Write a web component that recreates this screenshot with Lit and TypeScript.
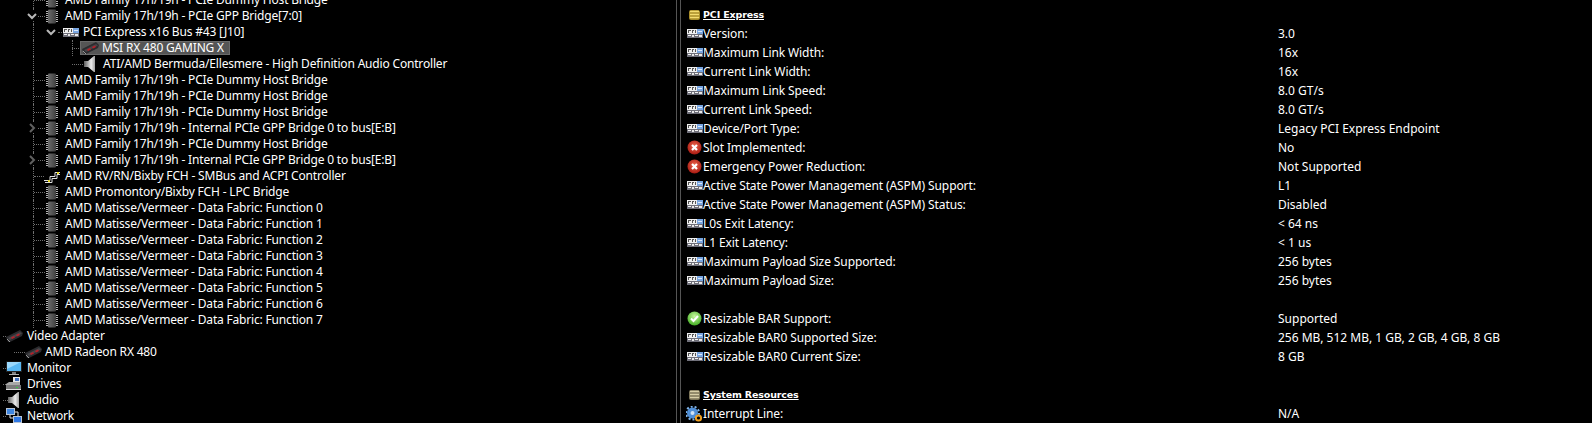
import { LitElement, html, css, svg, nothing } from 'lit';
import { customElement } from 'lit/decorators.js';

type IconName = 'chip' | 'pci' | 'gpu' | 'audio' | 'smbus' | 'monitor' | 'drive' | 'net';

interface TreeRow {
  text: string;
  icon: IconName;
  indent: number;       // icon left edge
  textX: number;        // text left edge
  guides?: number[];    // vertical dotted lines running through the row
  stub?: [number, number];
  chevron?: { x: number; open: boolean };
  selected?: boolean;
}

const chipRow = (text: string, chevron?: boolean, open = false): TreeRow => ({
  text, icon: 'chip', indent: 46, textX: 65, guides: [33], stub: [34, 45],
  chevron: chevron ? { x: 32, open } : undefined,
});

const TREE: TreeRow[] = [
  chipRow('AMD Family 17h/19h - PCIe Dummy Host Bridge'),
  chipRow('AMD Family 17h/19h - PCIe GPP Bridge[7:0]', true, true),
  { text: 'PCI Express x16 Bus #43 [J10]', icon: 'pci', indent: 63, textX: 83, guides: [33], stub: [58, 62], chevron: { x: 51, open: true } },
  { text: 'MSI RX 480 GAMING X', icon: 'gpu', indent: 82, textX: 102, guides: [33, 72], stub: [72, 81], selected: true },
  { text: 'ATI/AMD Bermuda/Ellesmere - High Definition Audio Controller', icon: 'audio', indent: 84, textX: 103, guides: [33], stub: [72, 83] },
  chipRow('AMD Family 17h/19h - PCIe Dummy Host Bridge'),
  chipRow('AMD Family 17h/19h - PCIe Dummy Host Bridge'),
  chipRow('AMD Family 17h/19h - PCIe Dummy Host Bridge'),
  chipRow('AMD Family 17h/19h - Internal PCIe GPP Bridge 0 to bus[E:B]', true),
  chipRow('AMD Family 17h/19h - PCIe Dummy Host Bridge'),
  chipRow('AMD Family 17h/19h - Internal PCIe GPP Bridge 0 to bus[E:B]', true),
  { text: 'AMD RV/RN/Bixby FCH - SMBus and ACPI Controller', icon: 'smbus', indent: 44, textX: 65, guides: [33], stub: [34, 44] },
  chipRow('AMD Promontory/Bixby FCH - LPC Bridge'),
  ...[0, 1, 2, 3, 4, 5, 6, 7].map((n) => chipRow(`AMD Matisse/Vermeer - Data Fabric: Function ${n}`)),
  { text: 'Video Adapter', icon: 'gpu', indent: 6, textX: 27, stub: [3, 6] },
  { text: 'AMD Radeon RX 480', icon: 'gpu', indent: 25, textX: 45, stub: [14, 25] },
  { text: 'Monitor', icon: 'monitor', indent: 6, textX: 27, stub: [3, 6] },
  { text: 'Drives', icon: 'drive', indent: 6, textX: 27, stub: [3, 6] },
  { text: 'Audio', icon: 'audio', indent: 8, textX: 27, stub: [3, 8] },
  { text: 'Network', icon: 'net', indent: 6, textX: 27, stub: [3, 6] },
];

type DetailIcon = 'pci' | 'err' | 'ok' | 'gear';

interface DetailRow {
  label?: string;
  value?: string;
  icon?: DetailIcon;
  header?: 'gold' | 'grey';
}

const DETAILS: DetailRow[] = [
  { label: 'PCI Express', header: 'gold' },
  { label: 'Version:', value: '3.0', icon: 'pci' },
  { label: 'Maximum Link Width:', value: '16x', icon: 'pci' },
  { label: 'Current Link Width:', value: '16x', icon: 'pci' },
  { label: 'Maximum Link Speed:', value: '8.0 GT/s', icon: 'pci' },
  { label: 'Current Link Speed:', value: '8.0 GT/s', icon: 'pci' },
  { label: 'Device/Port Type:', value: 'Legacy PCI Express Endpoint', icon: 'pci' },
  { label: 'Slot Implemented:', value: 'No', icon: 'err' },
  { label: 'Emergency Power Reduction:', value: 'Not Supported', icon: 'err' },
  { label: 'Active State Power Management (ASPM) Support:', value: 'L1', icon: 'pci' },
  { label: 'Active State Power Management (ASPM) Status:', value: 'Disabled', icon: 'pci' },
  { label: 'L0s Exit Latency:', value: '< 64 ns', icon: 'pci' },
  { label: 'L1 Exit Latency:', value: '< 1 us', icon: 'pci' },
  { label: 'Maximum Payload Size Supported:', value: '256 bytes', icon: 'pci' },
  { label: 'Maximum Payload Size:', value: '256 bytes', icon: 'pci' },
  {},
  { label: 'Resizable BAR Support:', value: 'Supported', icon: 'ok' },
  { label: 'Resizable BAR0 Supported Size:', value: '256 MB, 512 MB, 1 GB, 2 GB, 4 GB, 8 GB', icon: 'pci' },
  { label: 'Resizable BAR0 Current Size:', value: '8 GB', icon: 'pci' },
  {},
  { label: 'System Resources', header: 'grey' },
  { label: 'Interrupt Line:', value: 'N/A', icon: 'gear' },
];

const pciIcon = svg`<svg width="16" height="9" viewBox="0 0 16 9">
  <rect width="16" height="9" fill="#f0f0f0"/>
  <rect x="1" y="1" width="1" height="3" fill="#555"/><rect x="2" y="1" width="2" height="1" fill="#555"/>
  <rect x="5" y="1" width="2" height="1" fill="#555"/><rect x="5" y="1" width="1" height="3" fill="#555"/>
  <rect x="8" y="1" width="1" height="3" fill="#555"/>
  <rect x="10" y="0" width="6" height="5" fill="#7aa6e0"/>
  <rect x="11" y="2" width="4" height="1" fill="#dbe8fa"/>
  <rect x="0" y="5" width="16" height="4" fill="#70707a"/>
  <rect x="1" y="6" width="3" height="1" fill="#f4f4f4"/><rect x="5" y="6" width="2" height="2" fill="#e8e8e8"/>
  <rect x="8" y="6" width="3" height="1" fill="#f4f4f4"/><rect x="12" y="6" width="3" height="2" fill="#e8e8e8"/>
</svg>`;

const chipIcon = svg`<svg width="12" height="15" viewBox="0 0 12 15">
  <defs><linearGradient id="c" x1="0" x2="1"><stop offset="0" stop-color="#6c6c6c"/><stop offset="1" stop-color="#404040"/></linearGradient></defs>
  <rect x="2" y="0.5" width="8" height="14" rx="1" fill="url(#c)"/>
  <path d="M0 2.5h2M0 4.5h2M0 6.5h2M0 8.5h2M0 10.5h2M0 12.5h2M10 2.5h2M10 4.5h2M10 6.5h2M10 8.5h2M10 10.5h2M10 12.5h2" stroke="#b4b4b4" stroke-width="1"/>
</svg>`;

const gpuIcon = svg`<svg width="17" height="13" viewBox="0 0 17 13">
  <path d="M0 7 14 0l3 3-1 3L4 12 2 12z" fill="#2b2b2e"/>
  <path d="M2 8l12-6 2 1.5L4 10z" fill="#454549"/>
  <path d="M5 7.5l3-1.5 1 1.5-3 1.5zM10 5l3-1.5 1 1.5-3 1.5z" fill="#b81f28"/>
  <path d="M1 9l3 3" stroke="#9a9a9a" stroke-width="1"/>
</svg>`;

const audioIcon = svg`<svg width="11" height="16" viewBox="0 0 11 16">
  <defs><linearGradient id="a" x1="0" x2="1"><stop offset="0" stop-color="#5e5e5e"/><stop offset="0.65" stop-color="#ececec"/><stop offset="1" stop-color="#a0a0a0"/></linearGradient></defs>
  <path d="M0 5h4L10 0h1v16h-1L4 11H0z" fill="url(#a)"/>
</svg>`;

const smbusIcon = svg`<svg width="17" height="15" viewBox="0 0 17 15">
  <path d="M0 11.5h6V7.5h5V3.5h5M1 13.5h7V9.5h5V5.5h3" fill="none" stroke="#e0e0e0" stroke-width="1"/>
  <rect x="4" y="11" width="2" height="2" fill="#e8d820"/><rect x="13" y="3" width="2" height="2" fill="#e8d820"/>
</svg>`;

const monitorIcon = svg`<svg width="16" height="15" viewBox="0 0 16 15">
  <rect x="0" y="0.5" width="16" height="10.5" fill="#222"/>
  <rect x="1" y="1" width="14" height="9" fill="#58b8f4"/>
  <path d="M1 1h14L1 8z" fill="#9ad8fc"/>
  <rect x="6" y="11" width="4" height="2" fill="#7a7a7a"/><rect x="3" y="13" width="10" height="1" fill="#b0b0b0"/>
</svg>`;

const driveIcon = svg`<svg width="15" height="14" viewBox="0 0 15 14">
  <rect x="7" y="0" width="7" height="6" fill="#e8e8e8"/><rect x="9" y="1" width="4" height="3" fill="#3f6fc0"/>
  <path d="M0 7l3-2h11v3H0z" fill="#a8a8a8"/>
  <rect x="0" y="8" width="15" height="5" fill="#7c7c7c"/><rect x="0" y="12" width="15" height="1" fill="#e0e0e0"/>
  <rect x="10" y="10" width="2" height="1" fill="#30d040"/>
</svg>`;

const netIcon = svg`<svg width="16" height="16" viewBox="0 0 16 16">
  <rect x="0" y="0" width="9" height="7" fill="#b8c4d4"/><rect x="1" y="1" width="7" height="5" fill="#3f86e0"/>
  <rect x="7" y="8" width="9" height="7" fill="#b8c4d4"/><rect x="8" y="9" width="7" height="5" fill="#2f78e4"/>
  <path d="M4 7v3h3M12 8V4H9" fill="none" stroke="#e0e0e0"/>
</svg>`;

const errIcon = svg`<svg width="15" height="15" viewBox="0 0 15 15">
  <defs><radialGradient id="e" cx="0.5" cy="0.4" r="0.6"><stop offset="0" stop-color="#f06a50"/><stop offset="1" stop-color="#a81810"/></radialGradient></defs>
  <circle cx="7.5" cy="7.5" r="7" fill="url(#e)"/>
  <path d="M5 5l5 5M10 5l-5 5" stroke="#fff" stroke-width="2.2"/>
</svg>`;

const okIcon = svg`<svg width="15" height="15" viewBox="0 0 15 15">
  <defs><radialGradient id="o" cx="0.5" cy="0.35" r="0.7"><stop offset="0" stop-color="#c8f8a0"/><stop offset="1" stop-color="#38a818"/></radialGradient></defs>
  <circle cx="7.5" cy="7.5" r="7" fill="url(#o)"/>
  <path d="M4 7.5l2.5 2.5 4.5-5" fill="none" stroke="#fff" stroke-width="2"/>
</svg>`;

const gearIcon = svg`<svg width="17" height="16" viewBox="0 0 17 16">
  <circle cx="6.5" cy="7" r="5.5" fill="#4f8fd8"/>
  <circle cx="6.5" cy="7" r="6.5" fill="none" stroke="#7fb4ea" stroke-width="2" stroke-dasharray="2 2"/>
  <circle cx="6.5" cy="7" r="2" fill="#d0e4f8"/>
  <circle cx="12.5" cy="12" r="2.6" fill="#000" stroke="#f0a020" stroke-width="2"/>
</svg>`;

const TREE_ICONS: Record<IconName, unknown> = {
  chip: chipIcon, pci: pciIcon, gpu: gpuIcon, audio: audioIcon,
  smbus: smbusIcon, monitor: monitorIcon, drive: driveIcon, net: netIcon,
};

const DETAIL_ICONS: Record<DetailIcon, unknown> = {
  pci: pciIcon, err: errIcon, ok: okIcon, gear: gearIcon,
};

const headerIcon = (kind: 'gold' | 'grey') => {
  const top = kind === 'gold' ? '#f4dc70' : '#d8cfa8';
  const low = kind === 'gold' ? '#a88c28' : '#7c7458';
  return svg`<svg width="11" height="10" viewBox="0 0 11 10">
    <rect x="0" y="0" width="11" height="10" rx="2" fill="${low}"/>
    <path d="M1 1.5h9M1 4.5h9M1 7.5h9" stroke="${top}" stroke-width="1.5"/>
  </svg>`;
};

@customElement('app-root')
export class AppRoot extends LitElement {
  static styles = css`
    :host {
      display: flex;
      width: 1592px;
      height: 423px;
      overflow: hidden;
      background: #000;
      color: #fff;
      font-family: 'Noto Sans', 'DejaVu Sans', sans-serif;
      font-size: 12px;
    }

    .tree {
      width: 676px;
      flex: none;
      margin-top: -8px;
      overflow: hidden;
    }

    .row {
      position: relative;
      height: 16px;
      display: flex;
      align-items: center;
      white-space: nowrap;
    }

    .icon {
      position: absolute;
      top: 0;
      bottom: 0;
      display: flex;
      align-items: center;
    }

    .label {
      position: absolute;
      top: 0;
      line-height: 16px;
      letter-spacing: -0.18px;
    }

    .highlight {
      position: absolute;
      top: 1px;
      bottom: 1px;
      left: 80px;
      width: 150px;
      background: #555;
      outline: 1px solid #6a6a6a;
      outline-offset: -1px;
    }

    .guide {
      position: absolute;
      top: 0;
      bottom: 0;
      width: 0;
      border-left: 1px dotted #6e6e6e;
    }

    .stub {
      position: absolute;
      top: 8px;
      height: 0;
      border-top: 1px dotted #6e6e6e;
    }

    .chevron {
      position: absolute;
      top: 3px;
      width: 10px;
      height: 10px;
      margin-left: -5px;
      background: #000;
    }

    .chevron svg {
      display: block;
    }

    .divider {
      flex: none;
      width: 5px;
      margin-right: 5px;
      border-left: 1px solid #555;
      border-right: 1px solid #555;
      box-sizing: border-box;
    }

    .details {
      flex: 1;
      padding-top: 5px;
    }

    .line {
      display: grid;
      grid-template-columns: 592px 1fr;
      height: 19px;
      line-height: 19px;
      white-space: nowrap;
    }

    .line .name {
      display: flex;
      align-items: center;
      letter-spacing: -0.1px;
    }

    .glyph {
      width: 17px;
      flex: none;
      display: flex;
      justify-content: center;
      align-items: center;
    }

    .heading {
      font-family: 'DejaVu Sans', sans-serif;
      font-weight: 700;
      font-size: 9.5px;
      letter-spacing: -0.15px;
      text-decoration: underline;
    }
  `;

  renderRow(row: TreeRow) {
    return html`<div class="row">
      ${row.selected ? html`<div class="highlight"></div>` : nothing}
      ${(row.guides ?? []).map((x) => html`<span class="guide" style="left:${x}px"></span>`)}
      ${row.stub ? html`<span class="stub" style="left:${row.stub[0]}px;width:${row.stub[1] - row.stub[0]}px"></span>` : nothing}
      ${row.chevron ? this.renderChevron(row.chevron.x, row.chevron.open) : nothing}
      <span class="icon" style="left:${row.indent}px">${TREE_ICONS[row.icon]}</span>
      <span class="label" style="left:${row.textX}px">${row.text}</span>
    </div>`;
  }

  renderChevron(x: number, open: boolean) {
    const d = open ? 'M1 3 5 7 9 3' : 'M3 1 7 5 3 9';
    return html`<span class="chevron" style="left:${x}px">
      <svg width="10" height="10" viewBox="0 0 10 10">
        <path d="${d}" fill="none" stroke="${open ? '#b8b8b8' : '#606060'}" stroke-width="2"/>
      </svg>
    </span>`;
  }

  renderDetail(row: DetailRow) {
    if (row.header) {
      return html`<div class="line">
        <div class="name">
          <span class="glyph">${headerIcon(row.header)}</span>
          <span class="heading">${row.label}</span>
        </div>
        <div></div>
      </div>`;
    }
    return html`<div class="line">
      <div class="name">
        ${row.icon ? html`<span class="glyph">${DETAIL_ICONS[row.icon]}</span>` : nothing}
        <span>${row.label}</span>
      </div>
      <div>${row.value}</div>
    </div>`;
  }

  render() {
    return html`
      <div class="tree">${TREE.map((r) => this.renderRow(r))}</div>
      <div class="divider"></div>
      <div class="details">${DETAILS.map((r) => this.renderDetail(r))}</div>
    `;
  }
}
